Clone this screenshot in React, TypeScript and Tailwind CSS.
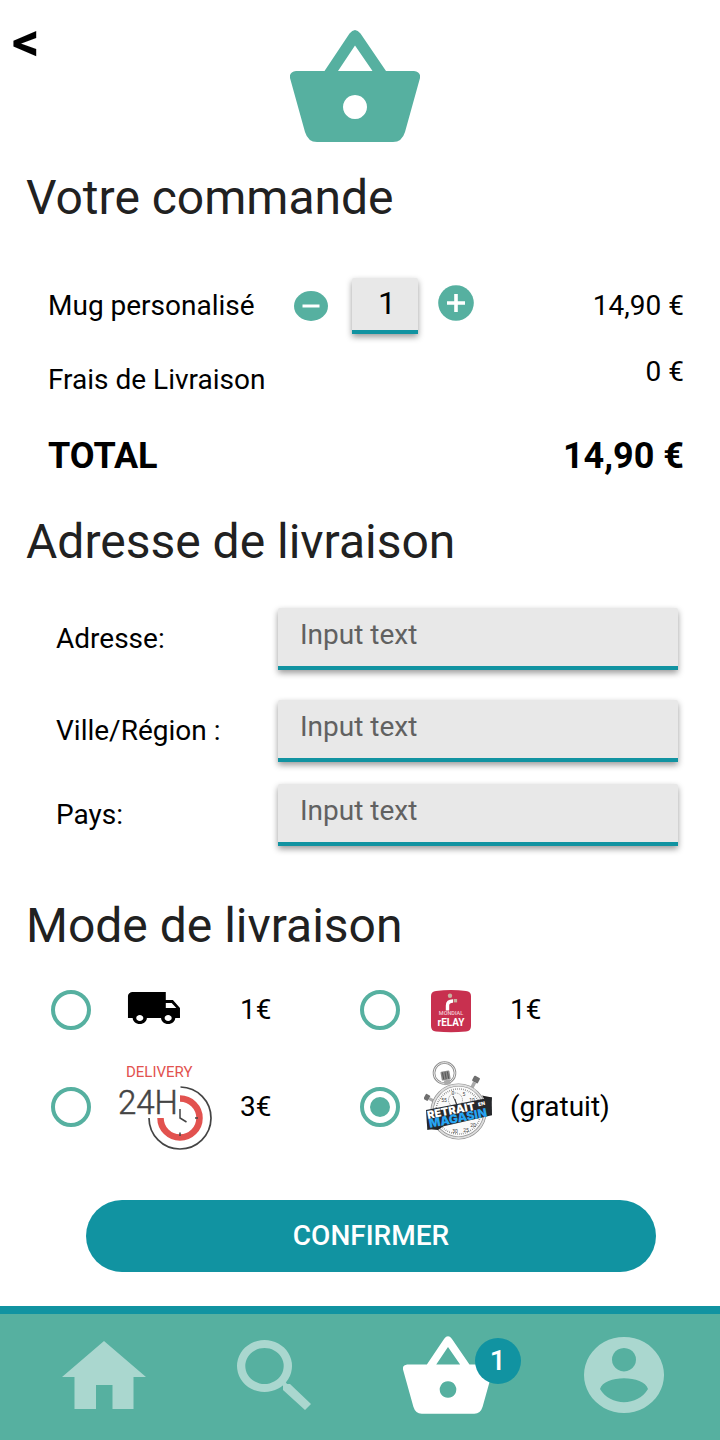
import { useState } from "react";
import type { ReactNode } from "react";

function Basket({ className }: { className: string }) {
  return (
    <svg viewBox="0 0 130 112" className={className} fill="currentColor" aria-hidden="true">
      <path
        fillRule="evenodd"
        d="M6 41H34.500L59.500 3.500Q65-3.500 70.500 3.500L96 41H124Q131 42 130 48L115 102Q112 112 103 112H27Q18 112 15 102L0 48Q-1 42 6 41ZM48 41H82.500L65 15.500ZM65 65a12 12 0 1 0 .01 0Z"
      />
    </svg>
  );
}

function Truck() {
  return (
    <svg viewBox="0 0 94 92" className="h-[92px] w-[94px]" aria-hidden="true">
      <path
        transform="translate(6.600 20) scale(2.364 2)"
        d="M20 8h-3V4H3c-1.100 0-2 .9-2 2v11h2c0 1.660 1.340 3 3 3s3-1.340 3-3h6c0 1.660 1.340 3 3 3s3-1.340 3-3h2v-5l-3-4zM6 18.500c-.83 0-1.500-.67-1.500-1.500s.67-1.500 1.500-1.500 1.500.67 1.500 1.500-.67 1.500-1.500 1.500zm13.500-9l1.960 2.500H17V9.500h2.500zm-1.500 9c-.83 0-1.500-.67-1.500-1.500s.67-1.500 1.500-1.500 1.500.67 1.500 1.500-.67 1.500-1.500 1.500z"
      />
    </svg>
  );
}

function Delivery24() {
  return (
    <svg viewBox="0 0 94 92" className="h-[92px] w-[94px]" fill="none" aria-hidden="true">
      <path d="M61.500 26A31 31 0 1 1 30 57" stroke="#444" strokeWidth="1.700" />
      <path d="M61 37.500A19.500 19.500 0 1 1 41.500 57" stroke="#e2524f" strokeWidth="6.500" />
      <path d="M61 48V57L67.500 61M61 71.500V75M76 57H79" stroke="#444" strokeWidth="1.500" />
      <text x="7" y="16" fontSize="15" fontWeight="400" fill="#e2524f">
        DELIVERY
      </text>
      <text x="-1" y="53" fontSize="33" fontWeight="300" fill="#444" stroke="#444" strokeWidth=".5">
        24H
      </text>
    </svg>
  );
}

function MondialRelay() {
  return (
    <svg viewBox="0 0 70 92" className="h-[92px] w-[70px]" aria-hidden="true">
      <path
        d="M12 27Q27 25 42 27Q47 27.500 47 32V62Q47 67 42 67.500Q27 69 12 67.500Q7 67 7 62V32Q7 27.500 12 27Z"
        fill="#c8304f"
      />
      <circle cx="26" cy="31.700" r="2.200" fill="#c9b3a0" />
      <path d="M23.500 46.500V41.500Q23.500 37 29 37" stroke="#fff" strokeWidth="3.400" fill="none" />
      <rect x="29.700" y="35" width="3.400" height="3.400" fill="#c9b3a0" />
      <text x="27" y="51" fontSize="5.500" fontWeight="500" fill="#f3cbd3" textAnchor="middle">
        MONDIAL
      </text>
      <text x="27" y="62" fontSize="10" fontWeight="700" fill="#fff" textAnchor="middle">
        rELAY
      </text>
    </svg>
  );
}

function Stopwatch() {
  return (
    <svg viewBox="0 0 70 92" className="h-[92px] w-[70px]" aria-hidden="true">
      <circle cx="20.500" cy="12" r="10.500" fill="none" stroke="#8d8d8d" strokeWidth="2.600" />
      <circle cx="20.500" cy="12" r="10.500" fill="none" stroke="#ececec" strokeWidth="1" />
      <g transform="rotate(-10 22 17)">
        <rect x="17.500" y="10" width="9" height="9" rx="1" fill="#8a8a8a" />
        <path d="M19.500 11V18M22 11V18M24.500 11V18" stroke="#555" strokeWidth="1" />
        <rect x="19.500" y="19" width="6" height="5" fill="#aaa" />
      </g>
      <g transform="rotate(27 50 22)">
        <rect x="47" y="15" width="6.500" height="6" rx="1" fill="#6f6f6f" />
        <rect x="48.500" y="21" width="3.500" height="6" fill="#aaa" />
      </g>
      <g transform="rotate(-62 6 38)">
        <rect x="3" y="32" width="6" height="5" rx="1" fill="#6f6f6f" />
        <rect x="4.500" y="37" width="3" height="6" fill="#aaa" />
      </g>
      <circle cx="34.500" cy="50.500" r="26.500" fill="#fafafa" stroke="#8f8f8f" strokeWidth="3.200" />
      <circle cx="34.500" cy="50.500" r="26.500" fill="none" stroke="#dedede" strokeWidth="1.800" />
      <circle cx="34.500" cy="50.500" r="22.500" fill="none" stroke="#666" strokeWidth="1.600" strokeDasharray=".6 1.400" />
      <g fill="#444" fontSize="5" textAnchor="middle">
        <text x="29" y="34">0</text>
        <text x="40" y="35">5</text>
        <text x="48" y="41">10</text>
        <text x="20" y="41">55</text>
        <text x="49" y="66">20</text>
        <text x="42" y="71">25</text>
        <text x="31" y="72">30</text>
      </g>
      <circle cx="31.500" cy="39" r="7" fill="none" stroke="#999" strokeWidth="1" strokeDasharray="1 .8" />
      <path d="M29 35L32.500 43M34.500 50L31 38" stroke="#333" strokeWidth=".8" />
      <path d="M58 34.500L68 36.500L66 47ZM3 68L14 69L24 62Z" fill="#222" />
      <path d="M2 49L67.700 36.300L68 54.300L3.300 69Z" fill="#26282b" />
      <g transform="rotate(-11 4 58)" fontWeight="900" className="font-[Inter,sans-serif]">
        <text x="4" y="58" fontSize="11" fill="#fff">
          RETRAIT
        </text>
        <text x="56" y="55" fontSize="5" fill="#fff">
          EN
        </text>
        <text x="4" y="67" fontSize="12" fill="#27a4f2">
          MAGASIN
        </text>
      </g>
    </svg>
  );
}

const fieldStyle =
  "rounded-t-xs border-b-4 border-[#1193a1] bg-[#e8e8e8] shadow-[0_3px_6px_rgba(0,0,0,0.4)] outline-none";

function Field({ id, label }: { id: string; label: string }) {
  return (
    <div className="flex items-center">
      <label htmlFor={id} className="w-[222px] shrink-0 text-[28px] leading-10">
        {label}
      </label>
      <input
        id={id}
        type="text"
        placeholder="Input text"
        className={`${fieldStyle} h-[62px] min-w-0 flex-1 pb-1.5 pl-[22px] text-[28px] placeholder:text-[#616161] placeholder:opacity-100`}
      />
    </div>
  );
}

type OptionProps = {
  name: string;
  price: string;
  checked: boolean;
  onSelect: () => void;
  logoStyle: string;
  children: ReactNode;
};

function DeliveryOption({ name, price, checked, onSelect, logoStyle, children }: OptionProps) {
  return (
    <label className="flex items-center">
      <input
        type="radio"
        name="livraison"
        aria-label={name}
        checked={checked}
        onChange={onSelect}
        className="size-10 shrink-0 appearance-none rounded-full border-4 border-[#56b0a0] bg-clip-content p-1.5 checked:bg-[#56b0a0]"
      />
      <span className={logoStyle}>{children}</span>
      <span className="text-[28px] leading-10">{price}</span>
    </label>
  );
}

const headingStyle = "pl-[26px] text-5xl leading-14 text-[#212121]";

export default function App() {
  const [quantity, setQuantity] = useState(1);
  const [mode, setMode] = useState("retrait");
  const wide = "w-[149px] shrink-0 pl-7";
  const narrow = "w-[110px] shrink-0 pl-6";
  const total = (quantity * 14.9).toFixed(2).replace(".", ",");

  return (
    <div className="flex min-h-screen flex-col bg-white font-[Roboto,sans-serif] text-black">
      <header className="grid grid-cols-[1fr_auto_1fr] items-start pt-[30px] pr-[22px] pl-3">
        <button type="button" aria-label="Retour" className="-mt-4 justify-self-start text-[54px] leading-14 font-bold">
          &lt;
        </button>
        <Basket className="h-28 w-[130px] text-[#56b0a0]" />
      </header>

      <main>
        <section className="mt-7">
          <h2 className={headingStyle}>Votre commande</h2>
          <div className="mt-[52px] flex items-center pr-9 pl-12 text-[28px] leading-10">
            <label htmlFor="quantity" className="w-[246px]">
              Mug personalisé
            </label>
            <button type="button" aria-label="Retirer" onClick={() => setQuantity(Math.max(1, quantity - 1))}>
              <svg viewBox="0 0 34 30" className="h-[30px] w-[34px]" aria-hidden="true">
                <ellipse cx="17" cy="15" rx="17" ry="15" fill="#56b0a0" />
                <path d="M8.500 15H25.500" stroke="#fff" strokeWidth="3" />
              </svg>
            </button>
            <input
              id="quantity"
              type="text"
              inputMode="numeric"
              value={quantity}
              onChange={(e) => setQuantity(Number(e.target.value) || 1)}
              className={`${fieldStyle} mr-5 ml-6 h-14 w-[66px] pb-0.5 pl-1 text-center text-[32px]`}
            />
            <button
              type="button"
              aria-label="Ajouter"
              onClick={() => setQuantity(quantity + 1)}
              className="flex h-[50px] items-center self-start"
            >
              <svg viewBox="0 0 36 36" className="size-9" aria-hidden="true">
                <circle cx="18" cy="18" r="17.800" fill="#56b0a0" />
                <path d="M9 18H27M18 9V27" stroke="#fff" strokeWidth="3.600" />
              </svg>
            </button>
            <span className="ml-auto">{total} €</span>
          </div>
          <div className="mt-[18px] flex h-12 justify-between pr-9 pl-12 text-[28px] leading-10">
            <span className="self-end">Frais de Livraison</span>
            <span className="self-start">0 €</span>
          </div>
          <div className="mt-8 flex justify-between pr-9 pl-12 text-4xl leading-12 font-bold">
            <span>TOTAL</span>
            <span>{total} €</span>
          </div>
        </section>

        <section className="mt-[34px]">
          <h2 className={headingStyle}>Adresse de livraison</h2>
          <div className="mt-[38px] flex flex-col pr-[42px] pl-14">
            <Field id="adresse" label="Adresse:" />
            <div className="mt-[30px] mb-[22px]">
              <Field id="ville" label="Ville/Région :" />
            </div>
            <Field id="pays" label="Pays:" />
          </div>
        </section>

        <section className="mt-[52px]">
          <h2 className={headingStyle}>Mode de livraison</h2>
          <div className="mt-[10px] grid grid-cols-[309px_1fr] gap-y-[5px] pl-[51px]">
            <DeliveryOption name="Transporteur" price="1€" checked={mode === "camion"} onSelect={() => setMode("camion")} logoStyle={wide}>
              <Truck />
            </DeliveryOption>
            <DeliveryOption name="Mondial Relay" price="1€" checked={mode === "relay"} onSelect={() => setMode("relay")} logoStyle={narrow}>
              <MondialRelay />
            </DeliveryOption>
            <DeliveryOption name="Delivery 24H" price="3€" checked={mode === "24h"} onSelect={() => setMode("24h")} logoStyle={wide}>
              <Delivery24 />
            </DeliveryOption>
            <DeliveryOption name="Retrait en magasin" price="(gratuit)" checked={mode === "retrait"} onSelect={() => setMode("retrait")} logoStyle={narrow}>
              <Stopwatch />
            </DeliveryOption>
          </div>
        </section>

        <div className="mt-[47px] pr-16 pl-[86px]">
          <button type="button" className="h-[72px] w-full rounded-full bg-[#1193a1] text-[28px] font-medium text-white">
            CONFIRMER
          </button>
        </div>
      </main>

      <nav className="mt-auto border-t-8 border-[#1193a1] bg-[#56b0a0] pr-14 pl-[62px] text-[#aad7cf]">
        <div className="flex h-[126px] items-center justify-between pb-1">
          <a href="#accueil" aria-label="Accueil">
            <svg viewBox="0 0 84 68" className="h-[68px] w-[84px]" fill="currentColor" aria-hidden="true">
              <path d="M42 0L84 36H71.500V68H50.500V44H34V68H12.500V36H0Z" />
            </svg>
          </a>
          <a href="#recherche" aria-label="Recherche">
            <svg viewBox="0 0 74 70" className="h-[70px] w-[74px]" fill="currentColor" aria-hidden="true">
              <path
                fillRule="evenodd"
                d="M27.500 0a27.500 26 0 1 0 .01 0ZM27.500 8a19.200 18 0 1 1-.01 0Z"
              />
              <path d="M45 43L48 41L50 44H53L74 64L68 70L46 50V46Z" />
            </svg>
          </a>
          <a href="#panier" aria-label="Panier" className="relative text-white">
            <Basket className="h-[78px] w-[90px]" />
            <span className="absolute top-0.5 left-[72px] flex size-[46px] items-center justify-center rounded-full bg-[#1193a1] text-[28px] font-medium">
              {quantity}
            </span>
          </a>
          <a href="#compte" aria-label="Compte">
            <svg viewBox="0 0 80 76" className="h-[76px] w-20" fill="currentColor" aria-hidden="true">
              <path
                fillRule="evenodd"
                d="M40 0a40 38 0 1 0 .01 0ZM40 11a12 11.700 0 1 1-.01 0ZM16 52C20 37.500 60 37.500 64 52C54 69.500 26 69.500 16 52Z"
              />
            </svg>
          </a>
        </div>
      </nav>
    </div>
  );
}
